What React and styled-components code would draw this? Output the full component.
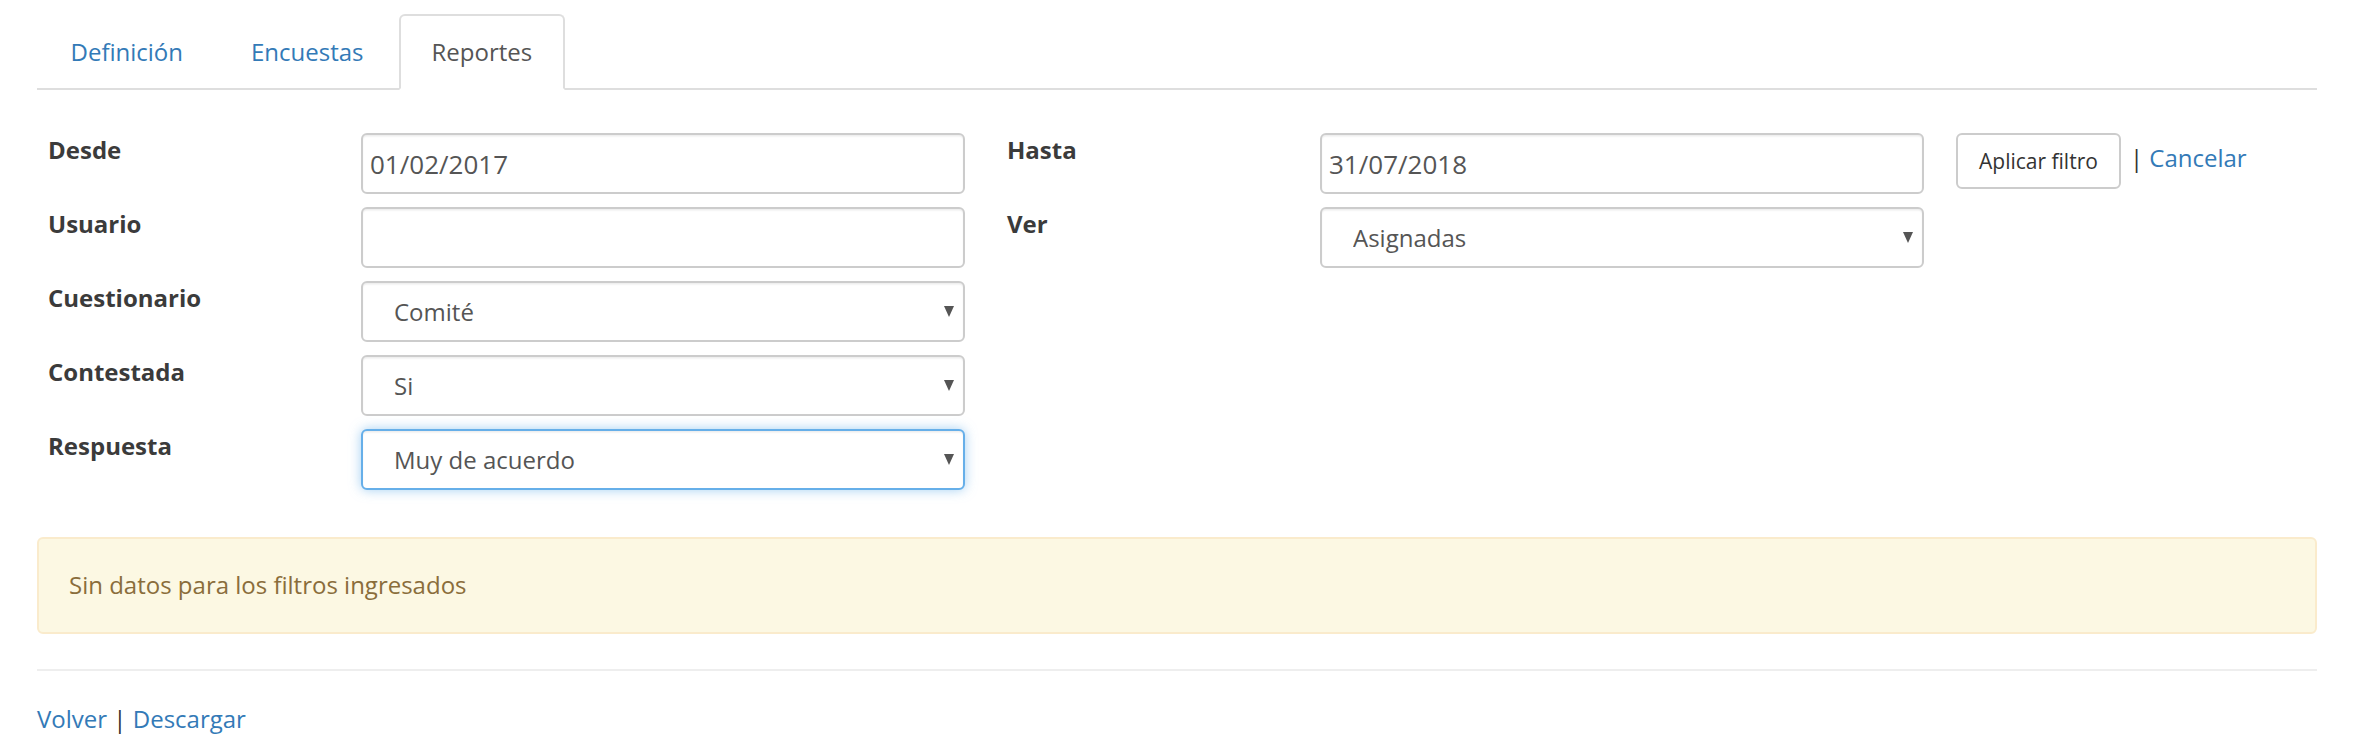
import styled, { createGlobalStyle } from 'styled-components';

const GlobalStyle = createGlobalStyle`
  body {
    margin: 0;
    background: #fff;
    font-family: "Open Sans", "Noto Sans", sans-serif;
    font-size: 24px;
    color: #333;
  }
  * { box-sizing: border-box; }
`;

const Page = styled.div`
  padding: 14px 0 0 37px;
`;

const Content = styled.div`
  width: 2280px;
`;

const Tabs = styled.ul`
  display: flex;
  margin: 0;
  padding: 0 0 0 1px;
  list-style: none;
  border-bottom: 2px solid #dedede;
`;

const Tab = styled.li`
  margin: 0 3px -2px 0;
  padding: 18px 30.5px;
  line-height: 36px;
  border: 2px solid ${p => (p.$active ? '#dedede' : 'transparent')};
  border-bottom-color: ${p => (p.$active ? '#fff' : 'transparent')};
  border-radius: 6px 6px 0 0;
  background: ${p => (p.$active ? '#fff' : 'transparent')};
  color: ${p => (p.$active ? '#555' : '#337ab7')};
`;

const Form = styled.div`
  display: flex;
  gap: 42px;
  margin-top: 43px;
  padding-left: 11px;
`;

const Column = styled.div`
  display: flex;
  flex-direction: column;
  gap: 13px;
`;

const Field = styled.div`
  display: flex;
  align-items: flex-start;
`;

const Label = styled.label`
  width: 313px;
  flex: none;
  font-weight: 700;
  line-height: 34px;
  color: #3b3b3b;
`;

const controlBase = `
  width: 604px;
  height: 61px;
  border-radius: 6px;
  background: #fff;
  font-family: "Open Sans", "Noto Sans", sans-serif;
  color: #555;
  outline: none;
`;

const TextInput = styled.input`
  ${controlBase}
  padding: 0 7px;
  font-size: 26px;
  border: 2px solid #cccccc;
  box-shadow: inset 0 1.5px 1.5px rgba(0, 0, 0, 0.075);
`;

const SelectWrap = styled.div`
  position: relative;
  width: 604px;
  &::after {
    content: '';
    position: absolute;
    right: 11px;
    top: 25px;
    border-left: 5.5px solid transparent;
    border-right: 5.5px solid transparent;
    border-top: 11px solid #555;
    pointer-events: none;
  }
`;

const Select = styled.select`
  ${controlBase}
  appearance: none;
  -webkit-appearance: none;
  padding: 0 30px 0 31px;
  font-size: 24px;
  border: 2px solid ${p => (p.$focused ? '#66afe9' : '#cccccc')};
  box-shadow: inset 0 1.5px 1.5px rgba(0, 0, 0, 0.075)
    ${p => (p.$focused ? ', 0 0 12px rgba(102, 175, 233, 0.6)' : '')};
`;

const Actions = styled.div`
  display: flex;
  align-items: flex-start;
  margin-left: 32px;
`;

const Button = styled.button`
  height: 56px;
  padding: 0 21px;
  border: 2px solid #cccccc;
  border-radius: 6px;
  background: #fff;
  font-family: "Open Sans", "Noto Sans", sans-serif;
  font-size: 21px;
  color: #333;
`;

const LinkLine = styled.div`
  line-height: 34px;
  margin: ${p => p.$inline ? '8px 0 0 9px' : '0'};
  color: #333;
  white-space: pre;
`;

const Link = styled.a`
  color: #337ab7;
  text-decoration: none;
`;

const Alert = styled.div`
  margin-top: 47px;
  padding: 29px 30px 30px;
  line-height: 34px;
  border: 2px solid #faebcc;
  border-radius: 6px;
  background: #fcf8e3;
  color: #8a6d3b;
`;

const Rule = styled.hr`
  margin: 35px 0 31px;
  border: 0;
  border-top: 2px solid #eeeeee;
`;

function SelectField({ label, value, focused }) {
  return (
    <Field>
      <Label>{label}</Label>
      <SelectWrap>
        <Select $focused={focused} defaultValue={value}>
          <option>{value}</option>
        </Select>
      </SelectWrap>
    </Field>
  );
}

export default function App() {
  return (
    <Page>
      <GlobalStyle />
      <Content>
        <Tabs>
          <Tab>Definición</Tab>
          <Tab>Encuestas</Tab>
          <Tab $active>Reportes</Tab>
        </Tabs>

        <Form>
          <Column>
            <Field>
              <Label>Desde</Label>
              <TextInput defaultValue="01/02/2017" />
            </Field>
            <Field>
              <Label>Usuario</Label>
              <TextInput defaultValue="" />
            </Field>
            <SelectField label="Cuestionario" value="Comité" />
            <SelectField label="Contestada" value="Si" />
            <SelectField label="Respuesta" value="Muy de acuerdo" focused />
          </Column>
          <Column>
            <Field>
              <Label>Hasta</Label>
              <TextInput defaultValue="31/07/2018" />
              <Actions>
                <Button>Aplicar filtro</Button>
                <LinkLine $inline>| <Link>Cancelar</Link></LinkLine>
              </Actions>
            </Field>
            <SelectField label="Ver" value="Asignadas" />
          </Column>
        </Form>

        <Alert>Sin datos para los filtros ingresados</Alert>
        <Rule />
        <LinkLine>
          <Link>Volver</Link> | <Link>Descargar</Link>
        </LinkLine>
      </Content>
    </Page>
  );
}
